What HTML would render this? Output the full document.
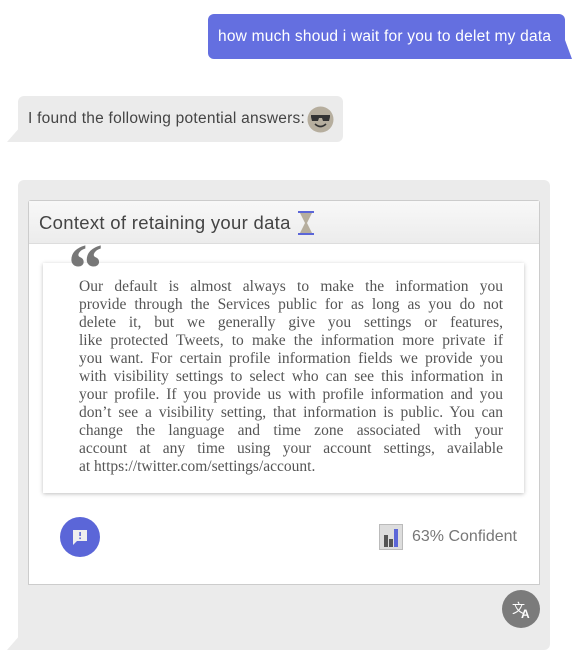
<!DOCTYPE html>
<html><head><meta charset="utf-8"><style>
*{margin:0;padding:0;box-sizing:border-box}
body{width:575px;height:659px;background:#fff;font-family:"Liberation Sans",sans-serif;position:relative;overflow:hidden}
.abs{position:absolute}
.user{left:208px;top:14px;width:357px;height:45px;background:#646fe0;border-radius:6px 6px 0 6px;color:#fff;font-size:15.5px;line-height:45px;padding-left:10px;letter-spacing:0.22px;white-space:nowrap}
.bot{left:18px;top:96px;width:325px;height:46px;background:#ebebeb;border-radius:6px 6px 6px 0;color:#444;font-size:15.5px;line-height:46px;padding-left:10px;letter-spacing:0.25px;white-space:nowrap}
.big{left:18px;top:180px;width:532px;height:470px;background:#ebebeb;border-radius:6px 6px 6px 0}
.card{left:28px;top:200px;width:512px;height:385px;background:#fff;border:1px solid #ccc;border-radius:3px 3px 0 0}
.hdr{left:0;top:0;width:510px;height:43px;background:linear-gradient(#f8f8f8,#ececec);border-bottom:1px solid #ddd;color:#444;font-size:18.5px;line-height:44px;padding-left:10px;letter-spacing:0.3px;white-space:nowrap}
.quote{left:14px;top:62px;width:481px;height:230px;background:#fff;box-shadow:0 1px 4px rgba(0,0,0,.25)}
.qt{left:36px;top:15px;width:424px;font-family:"Liberation Serif",serif;font-size:15.5px;line-height:18px;color:#555}
.qt div{text-align:justify;text-align-last:justify;white-space:nowrap}
.qt div.l{text-align-last:left}
</style></head><body>
<div class="abs user">how much shoud i wait for you to delet my data</div>
<svg class="abs" style="left:555px;top:40px" width="18" height="20"><path d="M0 0 L10 0 L17 19 L0 19Z" fill="#646fe0"/></svg>
<div class="abs bot">I found the following potential answers:</div>
<svg class="abs" style="left:7px;top:126px" width="14" height="16"><path d="M14 0 L14 16 L0 16Z" fill="#ebebeb"/></svg>
<svg class="abs" style="left:307px;top:106px" width="27" height="27"><circle cx="13.5" cy="13.5" r="13" fill="#b6ae9e"/><path d="M4 9h19v2l-1 4h-6l-1-3h-3l-1 3h-6l-1-4z" fill="#333"/><path d="M8 18 Q13.5 23 19 18" stroke="#333" stroke-width="1.6" fill="none"/></svg>
<div class="abs big"></div>
<svg class="abs" style="left:7px;top:634px" width="14" height="16"><path d="M14 0 L14 16 L0 16Z" fill="#ebebeb"/></svg>
<div class="abs card">
 <div class="abs hdr">Context of retaining your data</div>
 <svg class="abs" style="left:268px;top:8px" width="18" height="28"><rect x="1" y="2" width="16" height="2" fill="#5b66d8"/><rect x="1" y="24" width="16" height="2" fill="#5b66d8"/><path d="M3 4 L15 4 L10 14 L15 24 L3 24 L8 14Z" fill="#b6ae9e"/></svg>
 <div class="abs quote"><div class="abs qt">
<div>Our default is almost always to make the information you</div>
<div>provide through the Services public for as long as you do not</div>
<div>delete it, but we generally give you settings or features,</div>
<div>like protected Tweets, to make the information more private if</div>
<div>you want. For certain profile information fields we provide you</div>
<div>with visibility settings to select who can see this information in</div>
<div>your profile. If you provide us with profile information and you</div>
<div>don’t see a visibility setting, that information is public. You can</div>
<div>change the language and time zone associated with your</div>
<div>account at any time using your account settings, available</div>
<div class="l">at https://twitter.com/settings/account.</div>
 </div></div>
 <div class="abs" style="left:39px;top:34px;z-index:2;font-family:'Liberation Serif',serif;font-size:70px;color:#777;line-height:70px;font-weight:bold">“</div>
 <svg class="abs" style="left:30px;top:315px" width="42" height="44"><circle cx="21" cy="21" r="20" fill="#5b66d8" /><path d="M14 14h14v11h-10l-4 4z" fill="#eee"/><rect x="20.3" y="16" width="1.6" height="4" fill="#5b66d8"/><rect x="20.3" y="21.5" width="1.6" height="1.6" fill="#5b66d8"/></svg>
 <svg class="abs" style="left:350px;top:323px" width="24" height="26"><rect x="0.5" y="0.5" width="23" height="25" fill="#ddd" stroke="#bbb"/><rect x="5" y="11" width="4" height="12" fill="#555"/><rect x="10" y="15" width="4" height="8" fill="#555"/><rect x="15" y="5" width="4" height="18" fill="#5b66d8"/></svg>
 <div class="abs" style="left:383px;top:324px;font-size:16px;color:#777;line-height:24px">63% Confident</div>
</div>
<svg class="abs" style="left:501px;top:589px" width="42" height="42"><circle cx="20" cy="20" r="19" fill="#7b7b7b"/><text x="11" y="24" font-family="Liberation Sans" font-size="13" fill="#fff">文</text><text x="20" y="29" font-family="Liberation Sans" font-size="12" font-weight="bold" fill="#fff">A</text></svg>
</body></html>
